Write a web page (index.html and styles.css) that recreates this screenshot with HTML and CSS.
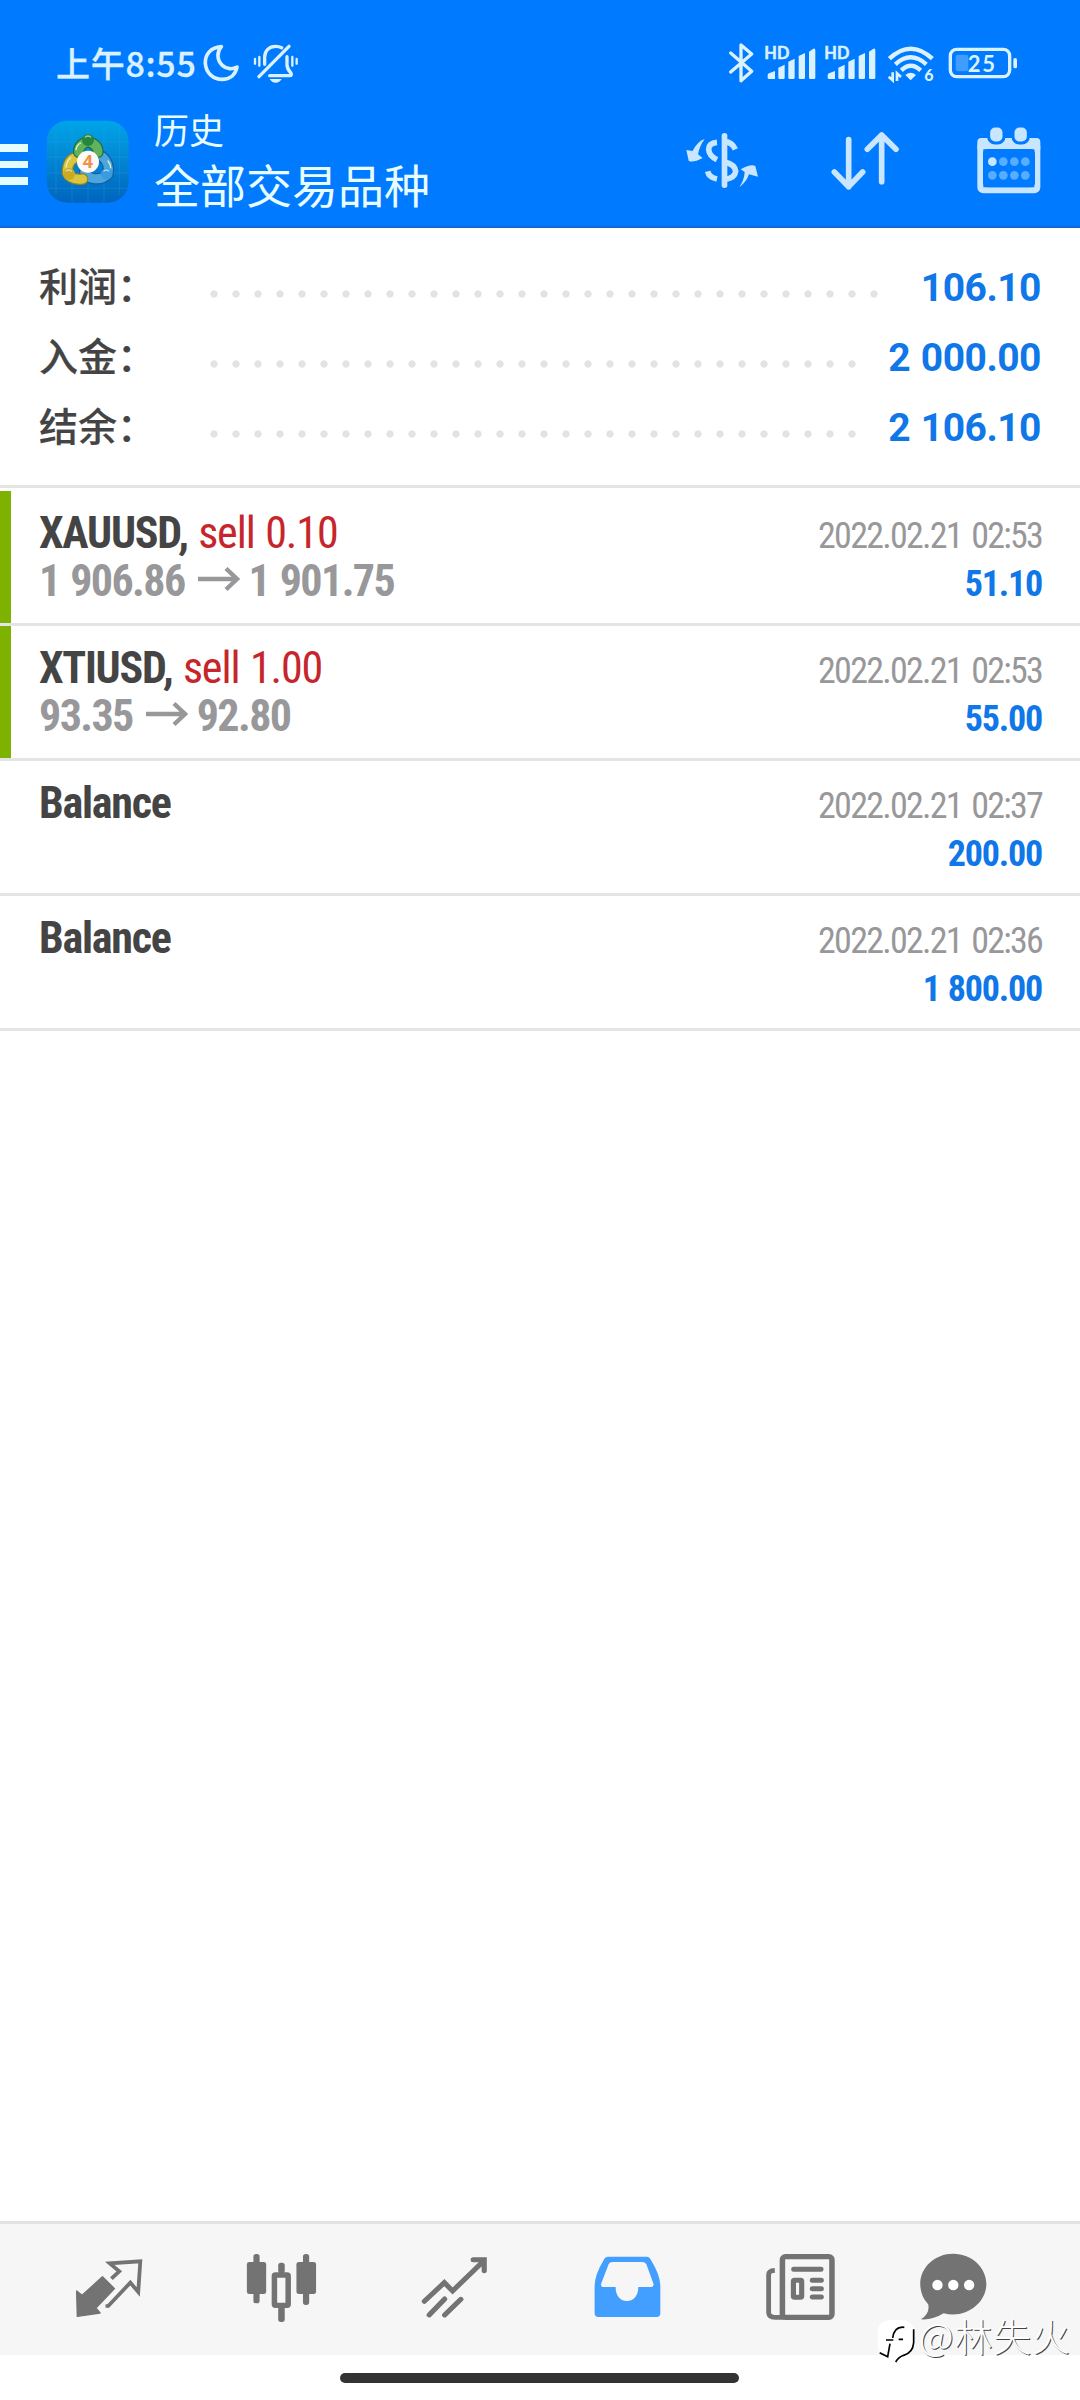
FILE: index.html
```html
<!DOCTYPE html>
<html lang="zh-CN">
<head>
<meta charset="utf-8">
<title>历史</title>
<link rel="stylesheet" href="styles.css">
</head>
<body>
<header class="header">
  <div class="status">
    <span class="clock">上午8:55</span>
    <svg class="moon" width="36" height="38" viewBox="609 73 108 114"><path d="M664 81C629 84 615 107 616 131C618 161 641 179 666 179C690 179 707 165 711 142C698 150 680 149 667 137C650 121 650 97 664 81Z" fill="none" stroke="#daf1ff" stroke-width="11" stroke-linejoin="round"/></svg>
    <svg class="bell" width="46" height="40" viewBox="760 72 138 120" fill="none" stroke="#daf1ff" stroke-width="10" stroke-linecap="round">
      <path d="M778 170L868 79M795 133V112C795 92 808 79 828 79Q838 79 846 83M862 110V135Q863 148 873 158Q878 167 870 167H810"/>
      <path d="M766 117V131M779 111V137M878 111V137M891 117V131" stroke-width="7"/>
      <path d="M810 177H846Q840 188 828 188Q816 188 810 177Z" fill="#daf1ff" stroke="none"/>
    </svg>
    <div class="status-right">
      <svg width="27" height="45" viewBox="20 60 81 135"><path d="M31 99L94 154L62 182V75L94 102L31 156" fill="none" stroke="#daf1ff" stroke-width="10" stroke-linejoin="round" stroke-linecap="round"/></svg>
      <svg class="signal" width="53" height="45" viewBox="131 60 159 135" fill="#daf1ff"><text x="132" y="117" class="hd" textLength="75">HD</text><path d="M142 166Q142 162 146 160L164 153V177H146Q142 177 142 173ZM174 143L193 134V173Q193 177 189 177H178Q174 177 174 173ZM204 125L223 116V173Q223 177 219 177H208Q204 177 204 173ZM235 108L254 99V173Q254 177 250 177H239Q235 177 235 173ZM266 95L279 86Q285 84 285 91V173Q285 177 281 177H270Q266 177 266 173Z"/></svg>
      <svg class="signal2" width="53" height="45" viewBox="131 60 159 135" fill="#daf1ff"><text x="132" y="117" class="hd" textLength="75">HD</text><path d="M142 166Q142 162 146 160L164 153V177H146Q142 177 142 173ZM174 143L193 134V173Q193 177 189 177H178Q174 177 174 173ZM204 125L223 116V173Q223 177 219 177H208Q204 177 204 173ZM235 108L254 99V173Q254 177 250 177H239Q235 177 235 173ZM266 95L279 86Q285 84 285 91V173Q285 177 281 177H270Q266 177 266 173Z"/></svg>
      <svg class="wifi" width="48" height="45" viewBox="501 60 144 135"><g fill="none" stroke="#daf1ff" stroke-width="13"><path d="M508 116Q572 56 637 116M526 133Q572 91 619 133M544 151Q572 124 602 151"/></g><path d="M556 165Q572 151 588 165L572 181Z" fill="#daf1ff"/><path d="M506 170L518 181V157M531 183V160L543 171" fill="none" stroke="#daf1ff" stroke-width="8"/><text x="613" y="184" class="six">6</text></svg>
      <svg class="battery" width="70" height="45" viewBox="684 60 210 135"><rect x="691" y="88" width="178" height="82" rx="19" fill="none" stroke="#daf1ff" stroke-width="10"/><rect x="707" y="104" width="38" height="50" rx="7" fill="#3f9dff"/><rect x="880" y="114" width="11" height="31" rx="5" fill="#daf1ff"/><text x="743" y="155" class="pct" textLength="82">25</text></svg>
    </div>
  </div>
  <div class="appbar">
    <div class="menu"><i></i><i></i><i></i></div>
    <svg class="logo" width="84" height="84" viewBox="20 15 252 252">
      <defs>
        <linearGradient id="bg" x1="0" y1="0" x2="0" y2="1"><stop offset="0" stop-color="#00a5e8"/><stop offset=".5" stop-color="#0384d2"/><stop offset="1" stop-color="#0064bd"/></linearGradient>
      </defs>
      <rect x="22" y="17" width="246" height="246" rx="62" fill="url(#bg)"/>
      <path d="M50 40V240M98 18V262M146 18V262M194 18V262M240 40V240M23 80H267M23 126H267M23 174H267M23 220H267" stroke="#2ba9e6" stroke-width="2" opacity=".4"/>
      <g fill="none" stroke-linecap="round">
        <path d="M190 126Q212 146 206 176Q190 196 160 190Q142 188 136 172" stroke="#115da3" stroke-width="34"/>
        <path d="M190 126Q212 146 206 176Q190 196 160 190Q142 188 136 172" stroke="#4ba6de" stroke-width="27"/>
        <path d="M108 128Q84 136 84 174Q94 196 130 192" stroke="#8c8526" stroke-width="34"/>
        <path d="M108 128Q84 136 84 174Q94 196 130 192" stroke="#d9c63e" stroke-width="27"/>
        <path d="M118 112Q118 88 146 80Q176 88 176 112" stroke="#17693c" stroke-width="34"/>
        <path d="M118 112Q118 88 146 80Q176 88 176 112" stroke="#61b35b" stroke-width="27"/>
        <path d="M110 104Q112 90 124 84M80 156Q82 138 94 128M206 138Q214 148 214 158" stroke="#e2f3bd" stroke-width="4"/>
      </g>
      <circle cx="146" cy="75" r="18" fill="#26863e"/><circle cx="89" cy="177" r="18" fill="#c9ab22"/><circle cx="202" cy="177" r="17" fill="#3b9bdd"/>
      <path d="M138 66Q146 60 154 66M80 168Q88 162 96 168M194 168Q202 162 208 168" fill="none" stroke="#fff" stroke-opacity=".55" stroke-width="4" stroke-linecap="round"/>
      <circle cx="146" cy="140" r="33" fill="#fffaf5"/>
      <text x="146" y="160" class="four">4</text>
    </svg>
    <div class="titles"><div class="small">历史</div><div class="big">全部交易品种</div></div>
    <svg class="money" width="76" height="60" viewBox="45 48 228 180" fill="#c8e6ff">
      <path d="M104 72Q82 79 68 108L49 105L56 137Q68 145 98 129L84 118Q88 94 104 72Z"/>
      <path d="M208 217Q230 200 237 178L264 185L256 153Q243 145 212 163L224 171Q223 194 208 217Z"/>
      <path d="M141 82Q116 84 116 103Q117 122 141 134M113 169Q117 187 141 192M164 79Q187 82 196 103M164 141Q195 148 197 169Q194 190 164 193" fill="none" stroke="#c8e6ff" stroke-width="17"/>
      <rect x="155" y="54" width="17" height="165" rx="8"/>
    </svg>
    <svg class="sort" width="70" height="62" viewBox="330 332 210 186" fill="none" stroke="#c8e6ff" stroke-width="17" stroke-linecap="round" stroke-linejoin="round"><path d="M386 361V502M343 458L386 502L428 458M485 487V347M442 390L485 347L528 390"/></svg>
    <svg class="calendar" width="66" height="70" viewBox="767 318 198 210">
      <rect x="780" y="371" width="171" height="140" rx="9" fill="none" stroke="#c8e6ff" stroke-width="18"/>
      <path d="M771 388V366Q771 354 783 354H948Q960 354 960 366V388Z" fill="#c8e6ff"/>
      <g fill="#c8e6ff" stroke="#007aff" stroke-width="9"><rect x="805" y="318" width="46" height="51" rx="19"/><rect x="878" y="318" width="46" height="51" rx="19"/></g>
      <rect x="788" y="387" width="156" height="115" rx="14" fill="#007aff"/>
      <circle cx="816" cy="425" r="13" fill="#c8e6ff"/>
      <g fill="#57adff"><circle cx="849" cy="425" r="13"/><circle cx="882" cy="425" r="13"/><circle cx="915" cy="425" r="13"/><circle cx="816" cy="466" r="13"/><circle cx="849" cy="466" r="13"/><circle cx="882" cy="466" r="13"/><circle cx="915" cy="466" r="13"/></g>
    </svg>
  </div>
</header>

<section class="summary">
  <div class="sum"><span class="label">利润：</span><span class="dots"></span><b>106.10</b></div>
  <div class="sum"><span class="label">入金：</span><span class="dots short"></span><b>2 000.00</b></div>
  <div class="sum"><span class="label">结余：</span><span class="dots short"></span><b>2 106.10</b></div>
</section>

<main class="deals">
  <div class="deal win">
    <div class="left"><div class="sym">XAUUSD, <em>sell 0.10</em></div>
      <div class="price">1 906.86<svg class="arrow" width="42" height="26" viewBox="0 0 42 26"><path d="M0 13H39M28 2.5L39 13L28 23.5" fill="none" stroke="#98989a" stroke-width="4.4"/></svg>1 901.75</div></div>
    <div class="right"><div class="date">2022.02.21 02:53</div><div class="value">51.10</div></div>
  </div>
  <div class="deal win">
    <div class="left"><div class="sym">XTIUSD, <em>sell 1.00</em></div>
      <div class="price">93.35<svg class="arrow" width="42" height="26" viewBox="0 0 42 26"><path d="M0 13H39M28 2.5L39 13L28 23.5" fill="none" stroke="#98989a" stroke-width="4.4"/></svg>92.80</div></div>
    <div class="right"><div class="date">2022.02.21 02:53</div><div class="value">55.00</div></div>
  </div>
  <div class="deal">
    <div class="left"><div class="sym">Balance</div></div>
    <div class="right"><div class="date">2022.02.21 02:37</div><div class="value">200.00</div></div>
  </div>
  <div class="deal">
    <div class="left"><div class="sym">Balance</div></div>
    <div class="right"><div class="date">2022.02.21 02:36</div><div class="value">1 800.00</div></div>
  </div>
</main>

<nav class="tabs">
  <svg viewBox="194 120 240 220" preserveAspectRatio="none"><path d="M222 243L238 256L297 200L332 236L278 294L290 309L224 319Z" fill="#737373" stroke="#737373" stroke-width="4" stroke-linejoin="round"/><path d="M323 206L346 184L318 160L407 154L401 246L378 218L314 288H306" fill="none" stroke="#737373" stroke-width="11"/></svg>
  <svg viewBox="696 120 240 220" preserveAspectRatio="none" fill="#737373"><rect x="716" y="156" width="56" height="96" rx="7"/><rect x="735" y="132" width="18" height="148" rx="8"/><rect x="860" y="156" width="57" height="96" rx="7"/><rect x="879" y="132" width="18" height="153" rx="8"/><rect x="807" y="158" width="19" height="32" rx="8"/><rect x="807" y="289" width="19" height="47" rx="8"/><rect x="796" y="195" width="40" height="91" rx="3" fill="none" stroke="#737373" stroke-width="16"/></svg>
  <svg viewBox="1198 120 240 220" preserveAspectRatio="none" fill="none" stroke="#737373" stroke-width="15" stroke-linecap="round"><path d="M1231 274L1289 218L1313 243L1404 152M1373 149H1405V182M1245 315L1290 267M1290 315L1337 268"/></svg>
  <svg viewBox="134 120 240 220" preserveAspectRatio="none"><path fill="#429eff" fill-rule="evenodd" d="M198 140H311Q317 140 321 147Q350 195 350 228V310Q350 321 339 321H170Q159 321 159 310V228Q159 195 187 147Q191 140 198 140ZM211 156Q203 156 200 162L178 221Q176 231 186 231H220C220 256 232 273 253 273S286 256 286 231H323Q332 231 330 221L310 164Q307 156 299 156Z"/></svg>
  <svg viewBox="638 120 240 220" preserveAspectRatio="none" fill="none" stroke="#737373" stroke-width="14"><rect x="706" y="140" width="144" height="182" rx="9" stroke-width="16"/><path d="M684 181Q666 182 666 194V308Q667 322 684 322H712"/><g stroke-linecap="round" stroke-width="15"><path d="M739 178H818M793 211H819M793 236H819M793 261H819"/></g><rect x="738" y="211" width="24" height="51" stroke-width="15" rx="3"/></svg>
  <svg viewBox="1079 120 240 220" preserveAspectRatio="none"><path fill="#737373" d="M1199 131C1253 131 1295 173 1295 222C1295 280 1235 327 1171 310Q1138 331 1105 328Q1132 310 1126 283Q1103 258 1103 222C1103 172 1145 131 1199 131Z"/><g fill="#fff"><ellipse cx="1153" cy="225" rx="15" ry="16"/><ellipse cx="1199" cy="225" rx="15" ry="16"/><ellipse cx="1245" cy="225" rx="15" ry="16"/></g></svg>
</nav>
<footer class="home"><i></i></footer>

<div class="watermark">
  <svg width="42" height="46" viewBox="46 56 126 138"><path d="M54 92Q58 61 100 61H120Q163 62 164 100V135Q160 165 130 172L108 188L112 172L74 168Q50 160 54 120Z" fill="#fff"/><path d="M134 84Q104 80 99 116M79 122H101M117 120H130M60 160L84 172L91 133M162 90V130Q160 160 132 168Q116 174 108 188" fill="none" stroke="#000" stroke-width="5"/></svg>
  <span>@林失火</span>
</div>
</body>
</html>
```
FILE: styles.css
```css
* { box-sizing: border-box; }
body {
  margin: 0;
  width: 1080px;
  height: 2400px;
  position: relative;
  display: flex;
  flex-direction: column;
  overflow: hidden;
  background: #fff;
  color: #444;
  font-family: Roboto, "Noto Sans CJK SC", sans-serif;
}
svg { display: block; flex: none; }

.header { height: 228px; background: #007aff; border-bottom: 2px solid #1468d6; }
.status { height: 100px; padding: 40px 0 0 56px; display: flex; align-items: flex-start; }
.clock { width: 147px; font: 500 34px/46px "Noto Sans CJK SC", sans-serif; letter-spacing: .7px; -webkit-text-stroke: .3px #daf1ff; color: #daf1ff; white-space: nowrap; }
.moon { margin-top: 4px; }
.bell { margin: 4px 0 0 14px; }
.status-right { display: flex; margin-left: 428px; }
.signal { margin-left: 10px; }
.signal2 { margin-left: 7px; }
.wifi { margin-left: 10px; }
.battery { margin-left: 13px; }
.hd { font: 700 49px Lato, sans-serif; stroke: #daf1ff; stroke-width: 1.5; }
.six { font: 900 48px Lato, sans-serif; fill: #daf1ff; }
.pct { font: 700 66px Lato, sans-serif; fill: #daf1ff; }
.four { font: 700 54px "Open Sans", sans-serif; fill: #f09048; text-anchor: middle; }

.appbar { height: 126px; display: flex; align-items: flex-start; }
.menu { width: 28px; padding-top: 44px; display: grid; gap: 9px; }
.menu i { height: 7.5px; background: #e4fbff; }
.logo { margin: 20px 0 0 18px; }
.titles { margin-left: 24px; width: 531px; color: #e8fdff; font-family: "Noto Sans CJK SC", sans-serif; }
.small { font-size: 35px; line-height: 44px; margin-top: 7px; }
.big { font-size: 46px; line-height: 60px; margin-top: 2px; }
.money { margin-top: 31px; }
.sort { margin: 30px 0 0 69px; }
.calendar { margin: 26px 0 0 76px; }

.summary { height: 260px; padding: 23px 39px 0; border-bottom: 3px solid #e4e4e4; }
.sum { height: 70px; display: flex; align-items: center; }
.label { width: 171px; font: 500 39px/66px "Noto Sans CJK SC", sans-serif; -webkit-text-stroke: .2px #444; white-space: nowrap; padding-bottom: 4px; }
.dots { width: 682px; height: 8px; margin-top: 16px; background: radial-gradient(circle, #e3e3e3 3.3px, transparent 4px) 0 0 / 22px 8px; margin-left: -7.5px; }
.dots.short { width: 660px; }
.sum b { margin-left: auto; padding-top: 3px; font-size: 39px; font-weight: 700; letter-spacing: -.5px; word-spacing: 1.5px; color: #0f77e8; white-space: nowrap; }

.deals { flex: 1; padding-top: 3px; }
.deal { height: 135px; border-bottom: 3px solid #e4e4e4; padding: 0 38px 0 39px; display: flex; justify-content: space-between; font-stretch: 75%; font-family: "Roboto Condensed", Roboto, sans-serif; white-space: nowrap; }
.win { padding-left: 28px; }
.win::before { content: ""; width: 11px; height: 132px; margin-left: -28px; margin-right: 28px; background: #7eb200; }
.win .left { flex: 1; }
.sym { font-size: 44px; font-weight: 700; line-height: 50px; margin-top: 17px; letter-spacing: -1.25px; word-spacing: 1.5px; }
.sym em { font-style: normal; font-weight: 400; letter-spacing: -1.1px; color: #c6262b; }
.price { font-size: 44px; font-weight: 700; line-height: 48px; margin-top: -1px; letter-spacing: -1.6px; word-spacing: 2px; color: #98989a; display: flex; align-items: center; }
.arrow { margin: 0 9px 5px 13px; }
.right { text-align: right; }
.date { font-size: 36px; line-height: 44px; margin-top: 23px; letter-spacing: -1.75px; word-spacing: 3px; color: #98989a; }
.value { font-size: 36px; line-height: 44px; margin-top: 4px; letter-spacing: -1.2px; word-spacing: 1px; font-weight: 700; color: #0f77e8; }

.tabs { height: 134px; border-top: 3px solid #e2e2e2; background: #f6f6f6; padding: 26px 0 0 67px; display: flex; }
.tabs svg { width: 82.6px; height: 73.3px; margin-right: 90.4px; }
.tabs svg:nth-child(5) { margin-right: 70px; }
.home { height: 45px; padding: 18px 341px 0 340px; }
.home i { display: block; height: 10px; border-radius: 5px; background: #333; }

.watermark { position: absolute; left: 875px; top: 2318px; display: flex; align-items: flex-start; }
.watermark span { font: 300 38px/40px "Noto Sans CJK SC", sans-serif; letter-spacing: .8px; color: #fff; text-shadow: 1px 1px 0 #444; margin-top: -3px; margin-left: 2px; white-space: nowrap; }
```
